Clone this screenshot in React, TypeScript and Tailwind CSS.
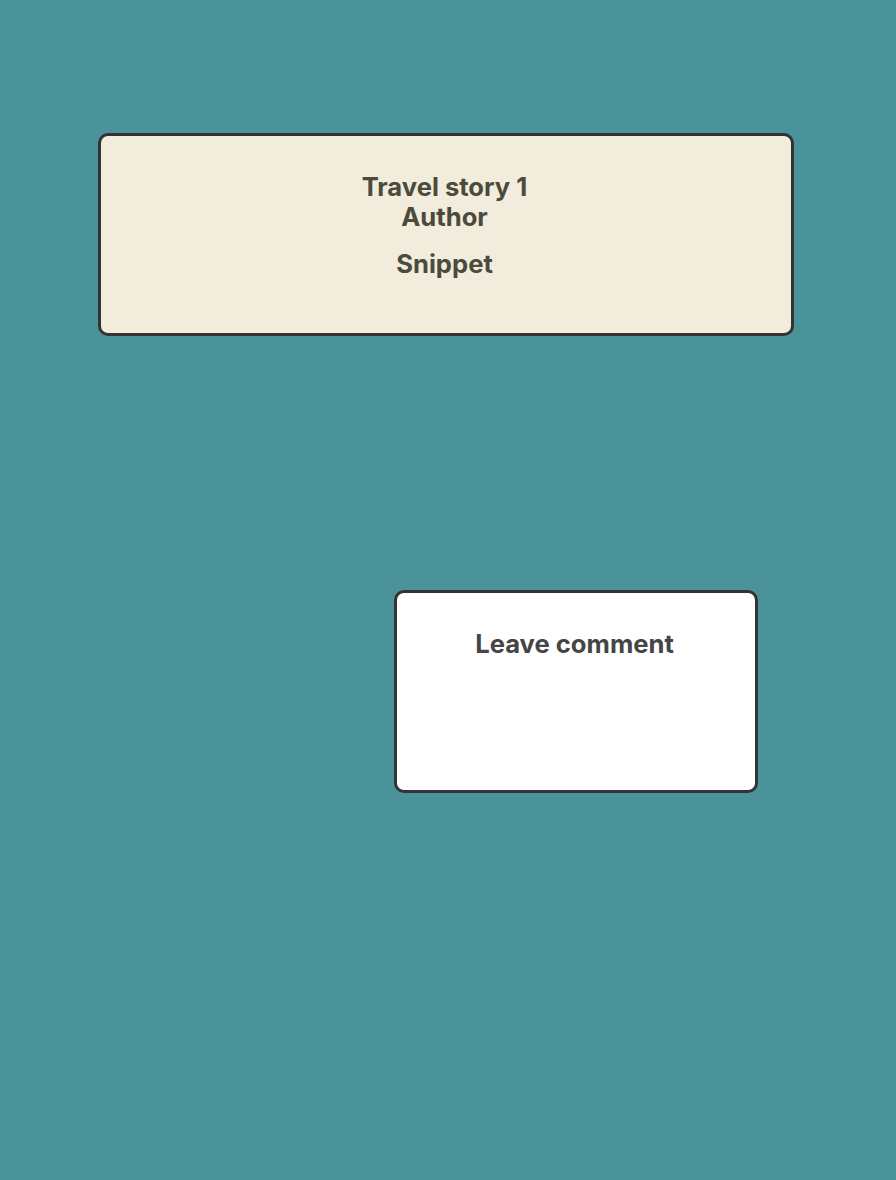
import React from 'react';

export default function App() {
  return (
    <div className="min-h-[1180px] w-full bg-[#4a939b] pt-[133px] font-['Inter',sans-serif]">
      {/* Story card */}
      <div className="ml-[98px] h-[203px] w-[696px] rounded-[10px] border-[3px] border-[#333333] bg-[#f1ecdb] pt-[36px] pr-[3px] text-center text-[25.6px] font-bold leading-[30px] text-[#4b4a3c]">
        <h2>Travel story 1</h2>
        <p>Author</p>
        <p className="mt-[17px]">Snippet</p>
      </div>

      {/* Comment box */}
      <div className="ml-[394px] mt-[254px] h-[203px] w-[364px] rounded-[10px] border-[3px] border-[#333333] bg-white pt-[36px] pr-[3px] text-center text-[25.6px] font-bold leading-[30px] text-[#454545]">
        <h3>Leave comment</h3>
      </div>
    </div>
  );
}
